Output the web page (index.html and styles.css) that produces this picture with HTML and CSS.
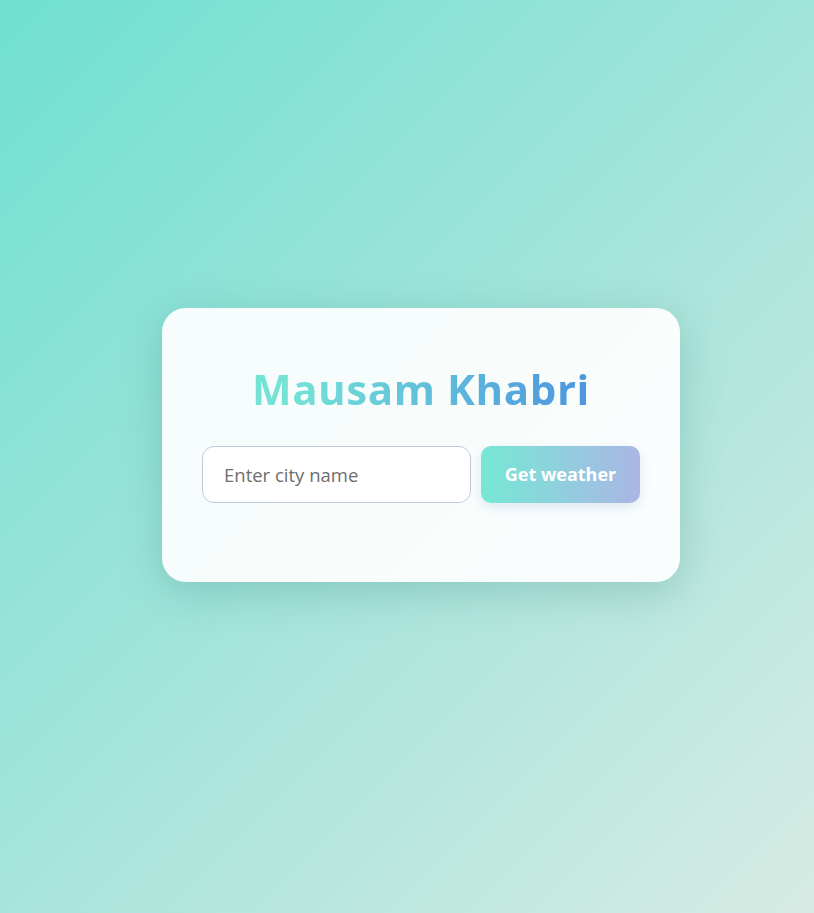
FILE: index.html
```html
<!DOCTYPE html>
<html lang="en">
<head>
<meta charset="utf-8">
<title>Mausam Khabri</title>
<link rel="stylesheet" href="styles.css">
</head>
<body>
<main class="page">
  <section class="card">
    <h1 class="title">Mausam Khabri</h1>
    <form class="search">
      <input class="city" type="text" placeholder="Enter city name">
      <button class="go" type="button">Get weather</button>
    </form>
    <div class="result"></div>
  </section>
</main>
</body>
</html>
```
FILE: styles.css
```css
* { box-sizing: border-box; }
html, body { margin: 0; height: 100%; }
body {
  font-family: "Open Sans", "Noto Sans", sans-serif;
  background: linear-gradient(135deg, #6fe0d2 0%, #a4e4da 50%, #d6ebe4 100%);
  min-height: 913px;
}
.page {
  min-height: 913px;
  display: flex;
  align-items: center;
  justify-content: center;
  padding-bottom: 24px;
}
.card {
  width: 518px;
  height: 274px;
  margin-left: 28px;
  background: rgba(255, 255, 255, 0.92);
  border-radius: 24px;
  padding: 52px 40px 40px;
  box-shadow: 0 10px 40px rgba(40, 120, 110, 0.25);
}
.title {
  margin: 0 0 28px;
  text-align: center;
  font-size: 42px;
  line-height: 58px;
  font-weight: 700;
  letter-spacing: 0.6px;
  background: linear-gradient(90deg, #74e3d6 20%, #4e98e0 85%);
  -webkit-background-clip: text;
  background-clip: text;
  color: transparent;
}
.search {
  display: flex;
  gap: 10px;
}
.city {
  width: 269px;
  height: 57px;
  border: 1px solid #c2cad9;
  border-radius: 12px;
  padding: 0 21px;
  font-family: inherit;
  font-size: 18.5px;
  background: #fff;
  color: #333;
  outline: none;
}
.city::placeholder { color: #6e6e6e; }
.go {
  width: 159px;
  height: 57px;
  border: none;
  border-radius: 10px;
  background: linear-gradient(90deg, #76e8d5 0%, #aab6e5 100%);
  color: #fff;
  font-family: inherit;
  font-size: 18px;
  font-weight: 700;
  box-shadow: 0 4px 12px rgba(120, 150, 200, 0.2);
  cursor: pointer;
}
```
